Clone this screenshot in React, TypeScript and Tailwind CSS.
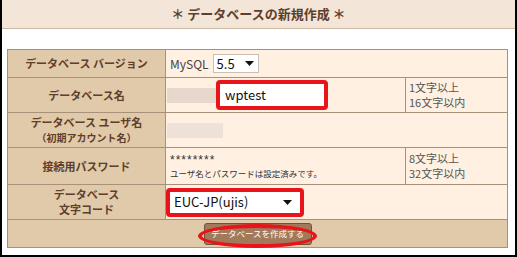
import React from "react";

const font = { fontFamily: '"Noto Sans CJK JP", "Liberation Sans", sans-serif' };

function Label({ children }: { children: React.ReactNode }) {
  return (
    <td className="border border-[#a8917a] bg-[#e1caa9] text-center align-middle text-[11px] font-bold leading-[15px] text-[#5e3e2c]">
      {children}
    </td>
  );
}

function Arrow() {
  return (
    <svg width="9" height="5" viewBox="0 0 9 5" className="shrink-0">
      <path d="M0 0 H9 L4.5 5 Z" fill="#111" />
    </svg>
  );
}

export default function App() {
  return (
    <div
      className="w-[517px] h-[257px] border-x-2 border-b-2 border-black bg-white overflow-hidden"
      style={font}
    >
      <div className="h-[29px] bg-[#f3e5d8] border-b border-[#cdb9a3] flex items-center justify-center text-[13px] font-bold text-[#5e3e2c]">
        ＊ データベースの新規作成 ＊
      </div>
      <div className="pt-[20px] pl-[5px]">
        <table className="w-[500px] border-collapse table-fixed">
          <colgroup>
            <col className="w-[158px]" />
            <col className="w-[240px]" />
            <col className="w-[102px]" />
          </colgroup>
          <tbody>
            <tr className="h-[28px]">
              <Label>データベース バージョン</Label>
              <td colSpan={2} className="border border-[#a8917a] bg-[#fff0e1] pl-[4px] align-middle">
                <div className="flex items-center gap-[4px] text-[12px] text-[#444]">
                  <span>MySQL</span>
                  <div className="w-[46px] h-[19px] bg-white border border-[#c9c0b5] flex items-center justify-between pl-[3px] pr-[4px] text-[13px] text-[#111]">
                    <span>5.5</span>
                    <Arrow />
                  </div>
                </div>
              </td>
            </tr>
            <tr className="h-[35px]">
              <Label>データベース名</Label>
              <td className="border border-[#a8917a] bg-[#fff0e1] pl-[1px] align-middle">
                <div className="flex items-center">
                  <div className="w-[49px] h-[15px] bg-[#e6d8cc]" />
                  <div className="w-[112px] h-[30px] border-[4px] border-[#e8141a] rounded-[4px] bg-white flex items-center pl-[5px] text-[13px] text-[#111]">
                    wptest
                  </div>
                </div>
              </td>
              <td className="border border-[#a8917a] bg-[#fff0e1] pl-[3px] text-[11px] leading-[15px] text-[#555]">
                1文字以上
                <br />
                16文字以内
              </td>
            </tr>
            <tr className="h-[35px]">
              <Label>
                データベース ユーザ名
                <br />
                <span className="text-[10px] leading-[13px]">（初期アカウント名）</span>
              </Label>
              <td colSpan={2} className="border border-[#a8917a] bg-[#fff0e1] pl-[1px] align-middle">
                <div className="w-[56px] h-[15px] bg-[#eee2d8]" />
              </td>
            </tr>
            <tr className="h-[37px]">
              <Label>接続用パスワード</Label>
              <td className="border border-[#a8917a] bg-[#fff0e1] pl-[4px] text-[#333]">
                <div className="text-[12px] leading-[14px] tracking-[1px]" style={{ fontFamily: '"Liberation Sans", sans-serif' }}>
                  ********
                </div>
                <div className="text-[8.5px] leading-[13px]">ユーザ名とパスワードは設定済みです。</div>
              </td>
              <td className="border border-[#a8917a] bg-[#fff0e1] pl-[3px] text-[11px] leading-[15px] text-[#555]">
                8文字以上
                <br />
                32文字以内
              </td>
            </tr>
            <tr className="h-[35px]">
              <Label>
                データベース
                <br />
                文字コード
              </Label>
              <td colSpan={2} className="border border-[#a8917a] bg-[#fff0e1] align-middle">
                <div className="w-[138px] h-[29px] border-[4px] border-[#e8141a] rounded-[4px] bg-white flex items-center justify-between pl-[4px] pr-[8px] text-[13px] text-[#111]">
                  <span>EUC-JP(ujis)</span>
                  <Arrow />
                </div>
              </td>
            </tr>
            <tr className="h-[28px]">
              <td colSpan={3} className="border border-[#a8917a] bg-[#e1caa9] align-middle p-0">
                <div className="flex justify-center">
                  <div className="relative">
                    <div className="w-[108px] h-[22px] rounded-[3px] bg-[#a27a5b] border border-[#6e5240] flex items-center justify-center text-[8.5px] text-white">
                      データベースを作成する
                    </div>
                    <div className="absolute left-[-6px] top-[1px] w-[119px] h-[24px] rounded-[50%] border-[4px] border-[#e8141a]" />
                  </div>
                </div>
              </td>
            </tr>
          </tbody>
        </table>
      </div>
    </div>
  );
}
